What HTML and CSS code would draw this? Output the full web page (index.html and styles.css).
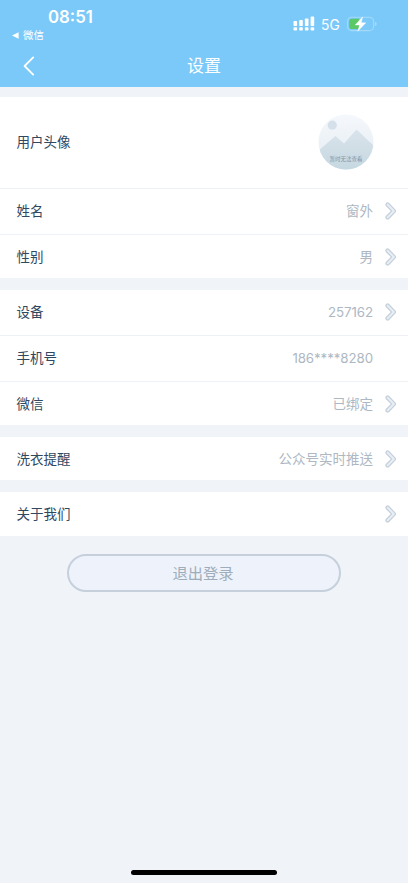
FILE: index.html
```html
<!DOCTYPE html>
<html lang="zh-CN">
<head>
<meta charset="utf-8">
<meta name="viewport" content="width=device-width, initial-scale=1">
<title>设置</title>
<link rel="stylesheet" href="styles.css">
</head>
<body>
<svg width="0" height="0" class="defs">
  <symbol id="chevron" viewBox="0 0 12 18">
    <path d="M2.6 2.6 L8.8 9 L2.6 15.4" fill="none" stroke="#c5d0db" stroke-width="4.4" stroke-linecap="round" stroke-linejoin="round"/>
    <path d="M2.6 2.6 L8.8 9 L2.6 15.4" fill="none" stroke="#e9eff6" stroke-width="1.9" stroke-linecap="round" stroke-linejoin="round"/>
  </symbol>
</svg>
<div class="screen">
  <header class="header">
    <div class="status">
      <span class="time">08:51</span>
      <div class="indicators">
        <svg class="signal" width="22" height="15" viewBox="0 0 22 15" fill="#fff">
          <rect x="0.5" y="5" width="3.6" height="5" rx=".8"/><rect x="6.2" y="4" width="3.6" height="6" rx=".8"/><rect x="11.9" y="2.4" width="3.6" height="7.6" rx=".8"/><rect x="17.6" y="0.6" width="3.6" height="9.4" rx=".8"/>
          <rect x="0.5" y="11.2" width="3.6" height="3.4" rx=".8"/><rect x="6.2" y="11.2" width="3.6" height="3.4" rx=".8"/><rect x="11.9" y="11.2" width="3.6" height="3.4" rx=".8"/><rect x="17.6" y="11.2" width="3.6" height="3.4" rx=".8"/>
        </svg>
        <span class="network">5G</span>
        <svg class="battery" width="31" height="16" viewBox="0 0 31 16">
          <rect x=".6" y="1.2" width="26" height="13.4" rx="4.2" fill="none" stroke="#a5d9fa" stroke-width="1.1"/>
          <path d="M5 2.8H12V13H5Q2.2 13 2.2 10.2V5.6Q2.2 2.8 5 2.8Z" fill="#5bc867"/>
          <path d="M28 5.8Q29.7 6.4 29.7 7.9T28 10Z" fill="#a5d9fa"/>
          <path d="M15.6 .9 L8.2 9 H12.6 L10.8 15.2 L18.8 6.8 H14.2Z" fill="#fff" stroke="#fff" stroke-width=".4" stroke-linejoin="round"/>
        </svg>
      </div>
    </div>
    <div class="return">
      <svg width="7" height="7" viewBox="0 0 7 7"><path d="M0 3.5 L6.6 .3 V6.7Z" fill="#fff"/></svg>
      <span>微信</span>
    </div>
    <nav class="nav">
      <svg class="back" width="12" height="20" viewBox="0 0 12 20"><path d="M10.2 1.4 L1.6 10 L10.2 18.6" fill="none" stroke="#fff" stroke-width="1.8" stroke-linecap="round" stroke-linejoin="round"/></svg>
      <h1>设置</h1>
    </nav>
  </header>
  <main class="settings">
    <section class="group group-profile">
      <div class="row row-avatar"><span class="label">用户头像</span>
        <div class="avatar">
          <svg width="56" height="56" viewBox="0 0 56 56">
            <defs>
              <linearGradient id="sky" x2="0" y2="1"><stop stop-color="#f5f8fc"/><stop offset="1" stop-color="#e3ebf2"/></linearGradient>
              <linearGradient id="hill" x2="0" y2="1"><stop stop-color="#dae3eb"/><stop offset="1" stop-color="#c5d8e1"/></linearGradient>
              <clipPath id="disc"><circle cx="28" cy="28" r="27.5"/></clipPath>
            </defs>
            <g clip-path="url(#disc)">
              <path d="M0 0H56V56H0Z" fill="url(#sky)"/>
              <circle cx="14.3" cy="11.2" r="4.6" fill="#d5e0ea"/>
              <path d="M0 37 L17.5 22 L26 29.5 L38.5 15.5 L56 32 V56 H0Z" fill="url(#hill)"/>
            </g>
          </svg>
          <span class="caption">暂时无法查看</span>
        </div>
      </div>
      <div class="row"><span class="label">姓名</span><span class="value">窗外</span><svg class="chevron"><use href="#chevron"/></svg></div>
      <div class="row"><span class="label">性别</span><span class="value">男</span><svg class="chevron"><use href="#chevron"/></svg></div>
    </section>
    <section class="group group-account">
      <div class="row"><span class="label">设备</span><span class="value number">257162</span><svg class="chevron"><use href="#chevron"/></svg></div>
      <div class="row"><span class="label">手机号</span><span class="value number">186****8280</span><span class="chevron"></span></div>
      <div class="row"><span class="label">微信</span><span class="value">已绑定</span><svg class="chevron"><use href="#chevron"/></svg></div>
    </section>
    <section class="group group-reminder">
      <div class="row"><span class="label">洗衣提醒</span><span class="value">公众号实时推送</span><svg class="chevron"><use href="#chevron"/></svg></div>
    </section>
    <section class="group">
      <div class="row"><span class="label">关于我们</span><span class="value"></span><svg class="chevron"><use href="#chevron"/></svg></div>
    </section>
  </main>
  <button class="logout" type="button">退出登录</button>
  <div class="home-indicator"></div>
</div>
</body>
</html>
```
FILE: styles.css
```css
* { box-sizing: border-box; }
body {
  margin: 0;
  background: #f0f4f8;
  font-family: "Liberation Sans", "Noto Sans CJK SC", sans-serif;
}
.defs { display: none; }
.screen {
  display: flex;
  flex-direction: column;
  width: 100%;
  height: 883px;
  overflow: hidden;
}
.header {
  flex: none;
  height: 87px;
  background: #7bc9f8;
  color: #fff;
}
.status {
  display: flex;
  justify-content: space-between;
  height: 29px;
  padding: 7px 30px 0 48px;
}
.time {
  font: 600 16.8px/21px Inter, sans-serif;
}
.indicators {
  display: flex;
  align-items: flex-start;
  padding-top: 9px;
}
.signal { margin-right: 6px; }
.network {
  width: 19px;
  margin-right: 7px;
  font: 400 13.8px/19px Inter, sans-serif;
}
.return {
  display: flex;
  align-items: center;
  gap: 4px;
  height: 13px;
  padding-left: 12px;
  font-size: 10.4px;
  line-height: 13px;
}
.nav {
  display: grid;
  grid-template-columns: 40px 1fr 40px;
  align-items: center;
  height: 45px;
}
.back { margin: 3px 0 0 23px; }
.nav h1 {
  margin: 0;
  padding-top: 5px;
  text-align: center;
  font-size: 17px;
  line-height: 24px;
  font-weight: 400;
}
.settings {
  display: flex;
  flex-direction: column;
  gap: 12px;
  padding-top: 10px;
}
.group { background: #fff; }
.row {
  display: flex;
  align-items: center;
  height: 44px;
  padding: 0 11px 1px 16.5px;
  font-size: 13.5px;
  line-height: 20px;
}
.group-profile .row { height: 46px; }
.group-profile .row-avatar {
  height: 91px;
  padding-bottom: 2px;
}
.group-account .row { height: 45px; }
.group-account .row:nth-child(2) { height: 46px; padding-bottom: 2px; }
.row + .row { border-top: 1px solid #edf1f6; }
.group-profile .row:last-child,
.group-account .row:last-child { height: 44px; padding-bottom: 0; }
.group-reminder .row { height: 43px; padding-bottom: 0; }
.label,
.value { padding-top: 2px; }
.label { color: #2f475f; }
.value {
  margin-left: auto;
  color: #adb8c3;
}
.number {
  padding-top: 0;
  font-family: Inter, sans-serif;
  font-size: 13.3px;
  letter-spacing: -0.08px;
}
.chevron {
  flex: none;
  width: 12px;
  height: 18px;
  margin-left: 12px;
}
.avatar {
  position: relative;
  width: 56px;
  height: 56px;
  margin: 0 23px 0 auto;
}
.avatar svg { display: block; }
.caption {
  position: absolute;
  top: 41px;
  left: 0;
  width: 56px;
  text-align: center;
  color: #7f94a8;
  font-size: 5.5px;
  line-height: 8px;
}
.logout {
  flex: none;
  align-self: center;
  width: 274px;
  height: 38px;
  margin-top: 18px;
  padding: 2px 2px 0 0;
  border: 2px solid #c5d0dc;
  border-radius: 19px;
  background: #eef2fa;
  color: #9dadbb;
  font: 400 15.3px/22px "Liberation Sans", "Noto Sans CJK SC", sans-serif;
}
.home-indicator {
  width: 146px;
  height: 5px;
  margin: auto auto 8px;
  border-radius: 3px;
  background: #000;
}
```
